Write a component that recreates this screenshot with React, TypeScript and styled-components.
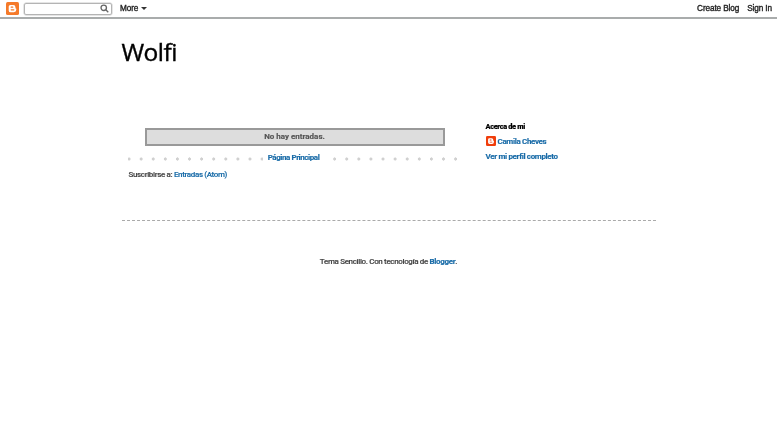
import React from 'react';
import styled, { createGlobalStyle } from 'styled-components';

const GlobalStyle = createGlobalStyle`
  html, body {
    margin: 0;
    padding: 0;
    background: #fff;
  }
  body {
    font-family: Roboto, "Open Sans", sans-serif;
    letter-spacing: -0.35px;
    color: #333;
    -webkit-text-stroke: 0.15px currentColor;
  }
  a {
    color: #1a6ca8;
    text-decoration: none;
  }
`;

const Page = styled.div`
  filter: blur(0.3px);
`;

const Navbar = styled.div`
  height: 17px;
  border-bottom: 2px solid #a9acac;
  display: flex;
  align-items: center;
  padding: 0 5px 0 6px;
  font-family: "Liberation Sans", Arial, sans-serif;
  font-size: 8.2px;
  font-weight: 400;
  letter-spacing: -0.1px;
  color: #222;
  -webkit-text-stroke: 0.35px #222;
`;

const Logo = styled.svg`
  width: 13px;
  height: 13px;
  flex: none;
`;

const SearchBox = styled.div`
  width: 84px;
  height: 10px;
  margin-left: 5px;
  border: 1px solid #b4b4b4;
  border-radius: 2px;
  box-shadow: 0 0 0 0.5px #ccc;
  display: flex;
  align-items: center;
  justify-content: flex-end;
  padding-right: 2px;
  color: #666;
`;

const More = styled.div`
  margin-left: 8px;
  display: flex;
  align-items: center;
  gap: 3px;
`;

const Caret = styled.span`
  width: 0;
  height: 0;
  border-left: 3px solid transparent;
  border-right: 3px solid transparent;
  border-top: 3px solid #333;
`;

const NavLinks = styled.div`
  margin-left: auto;
  display: flex;
  gap: 8px;
`;

const Outer = styled.div`
  width: 534px;
  margin: 0 auto;
`;

const Title = styled.h1`
  margin: 0;
  padding-top: 16px;
  font-family: "Open Sans", sans-serif;
  font-size: 24.5px;
  line-height: 34px;
  font-weight: 400;
  letter-spacing: -0.5px;
  font-variant-ligatures: none;
  color: #000;
  -webkit-text-stroke: 0.4px #000;
`;

const Columns = styled.div`
  display: flex;
  margin-top: 55px;
  padding-bottom: 39px;
  border-bottom: 1px dashed #aaa;
`;

const Main = styled.div`
  width: 364px;
  flex: none;
  padding: 4px 0 0 6px;
  box-sizing: border-box;
`;

const Status = styled.div`
  width: 300px;
  height: 18px;
  margin-left: 17px;
  box-sizing: border-box;
  border: 2px solid #999;
  background: #ddd;
  font-size: 8px;
  font-weight: 700;
  letter-spacing: 0;
  color: #555;
  text-align: center;
  line-height: 13px;
`;

const Pager = styled.div`
  width: 332px;
  height: 12px;
  margin-top: 6px;
  display: flex;
  justify-content: center;
  align-items: center;
  font-size: 8px;
  font-weight: 700;
  line-height: 12px;
  background-image: radial-gradient(circle, #d0d0d0 1.4px, transparent 1.8px);
  background-size: 12.1px 12px;
  background-position: -5px 1px;
  background-repeat: repeat-x;
`;

const PagerLink = styled.a`
  background: #fff;
  padding: 0 5px;
  letter-spacing: -0.44px;
`;

const Feed = styled.div`
  margin-top: 5px;
  padding-left: 1px;
  font-size: 8px;
  font-weight: 500;
  line-height: 12px;
  color: #444;
`;

const Sidebar = styled.div`
  margin-top: -3px;
  font-size: 8px;
  font-weight: 700;
`;

const WidgetTitle = styled.h2`
  margin: 0 0 1px;
  font-size: 7.4px;
  line-height: 11px;
  font-weight: 900;
  color: #000;
`;

const Author = styled.div`
  display: flex;
  align-items: center;
  gap: 2px;
  height: 16px;
`;

const ProfileLink = styled.a`
  display: block;
  line-height: 16px;
`;

const SmallLogo = styled(Logo)`
  width: 10px;
  height: 10px;
`;

const Footer = styled.div`
  padding-top: 35px;
  text-align: center;
  font-size: 8px;
  font-weight: 500;
  line-height: 12px;
  color: #444;

  a {
    font-weight: 700;
  }
`;

const BloggerMark = ({ small, color }: { small?: boolean; color: string }) => {
  const Comp = small ? SmallLogo : Logo;
  return (
    <Comp viewBox="0 0 24 24">
      <rect width="24" height="24" rx="3" fill={color} />
      <path
        d="M8 5.500h5.500a4 4 0 0 1 4 4v1.500c0 .6.4 1 1 1 .6 0 .5.4.5 1v1.500a4.500 4.500 0 0 1-4.500 4.500h-6A3.500 3.500 0 0 1 5 15.500v-7A3 3 0 0 1 8 5.500z"
        fill="#fff"
      />
      <rect x="8.500" y="8.500" width="5" height="2" rx="1" fill={color} />
      <rect x="8.500" y="13.500" width="7" height="2" rx="1" fill={color} />
    </Comp>
  );
};

const App: React.FC = () => (
  <Page>
    <GlobalStyle />
    <Navbar>
      <BloggerMark color="#f57a2a" />
      <SearchBox>
        <svg width="9" height="9" viewBox="0 0 12 12" fill="none" stroke="currentColor" strokeWidth="1.800">
          <circle cx="5" cy="5" r="3.600" />
          <path d="M7.800 7.800 11 11" />
        </svg>
      </SearchBox>
      <More>
        More
        <Caret />
      </More>
      <NavLinks>
        <span>Create Blog</span>
        <span>Sign In</span>
      </NavLinks>
    </Navbar>
    <Outer>
      <Title>Wolfi</Title>
      <Columns>
        <Main>
          <Status>No hay entradas.</Status>
          <Pager>
            <PagerLink href="#">Página Principal</PagerLink>
          </Pager>
          <Feed>
            Suscribirse a: <a href="#">Entradas (Atom)</a>
          </Feed>
        </Main>
        <Sidebar>
          <WidgetTitle>Acerca de mi</WidgetTitle>
          <Author>
            <BloggerMark small color="#f03e0c" />
            <a href="#">Camila Cheves</a>
          </Author>
          <ProfileLink href="#">Ver mi perfil completo</ProfileLink>
        </Sidebar>
      </Columns>
      <Footer>
        Tema Sencillo. Con tecnología de <a href="#">Blogger</a>.
      </Footer>
    </Outer>
  </Page>
);

export default App;
